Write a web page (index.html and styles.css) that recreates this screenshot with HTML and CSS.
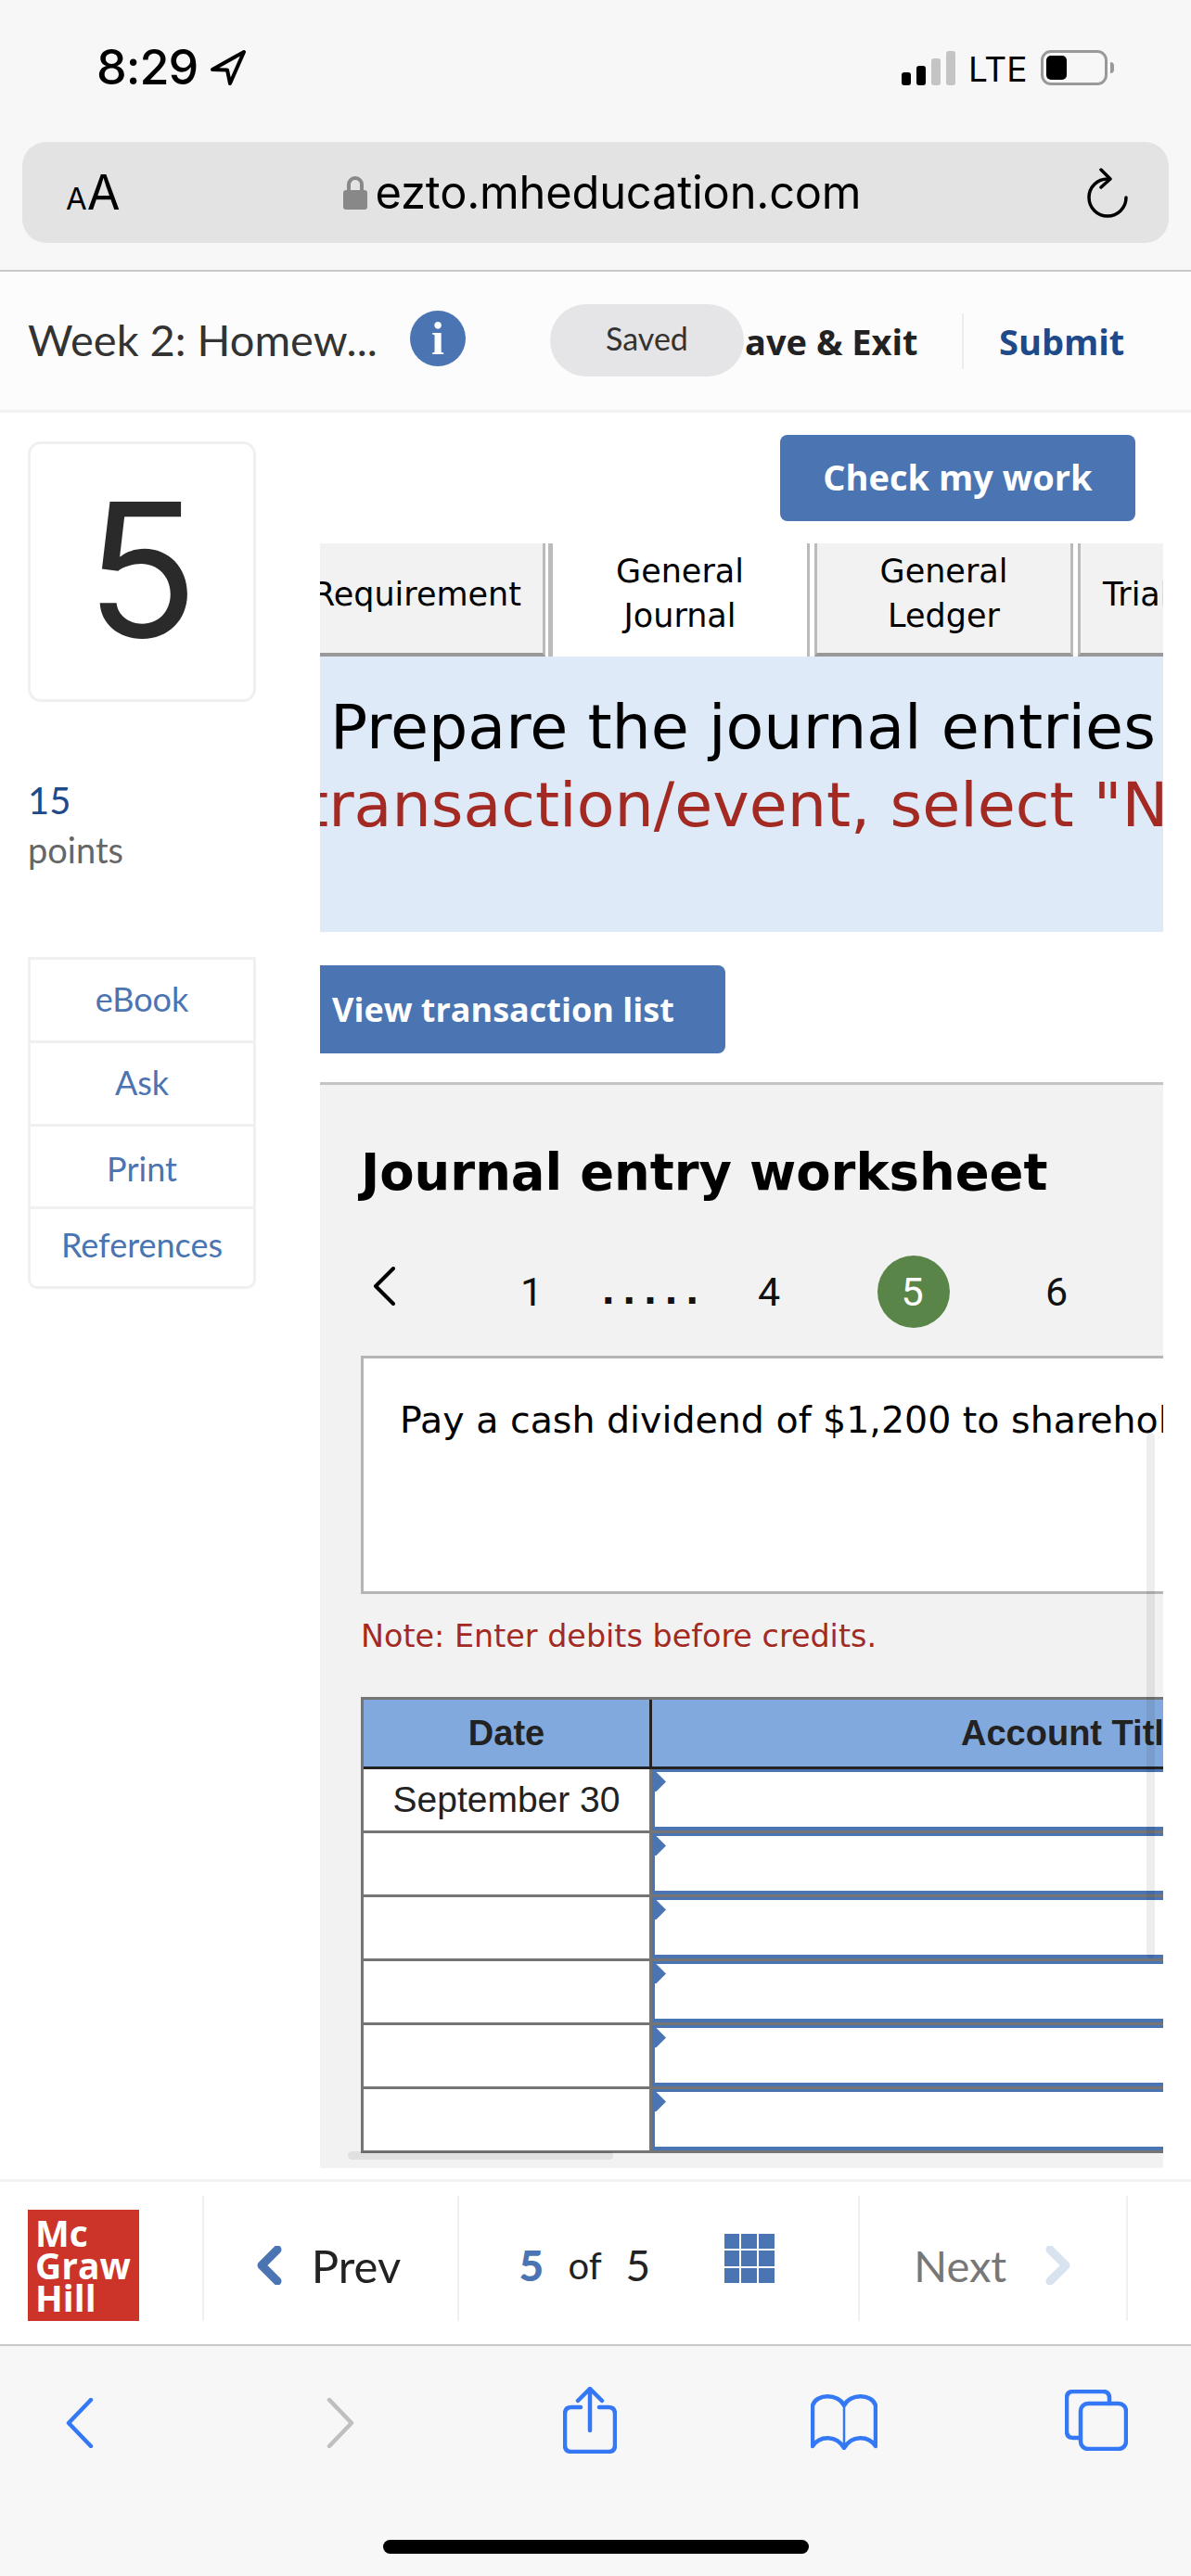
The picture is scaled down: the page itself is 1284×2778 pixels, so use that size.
FILE: index.html
```html
<!DOCTYPE html>
<html>

<head>
    <meta charset="utf-8" />
    <title>Journal entry worksheet</title>
    <link rel="stylesheet" href="styles.css">
</head>

<body>
    <div class="browserTop">
        <div class="statusBar">
            <div class="statusLeft">
                <span class="time">8:29</span>
                <svg class="locationIcon" viewBox="0 0 40 38"><path d="M37 2 L3 21 L19 21.5 L22 36 Z" /></svg>
            </div>
            <div class="statusRight">
                <div class="signal">
                    <i class="bar bar1"></i><i class="bar bar2"></i><i class="bar bar3"></i><i class="bar bar4"></i>
                </div>
                <span class="lte">LTE</span>
                <div class="battery"><i class="batteryFill"></i></div>
                <i class="batteryNub"></i>
            </div>
        </div>
        <div class="addressBar">
            <div class="textSize"><span class="smallA">A</span><span class="bigA">A</span></div>
            <div class="url">
                <svg class="lockIcon" viewBox="0 0 26 36">
                    <path class="lockLoop" d="M6 17 V9 A7 7 0 0 1 20 9 V17" />
                    <rect x="0" y="15" width="26" height="21" rx="3" />
                </svg>
                <span>ezto.mheducation.com</span>
            </div>
            <svg class="reloadIcon" viewBox="0 0 44 54">
                <path d="M22 12 A20 20 0 1 0 42 32" />
                <path d="M15 2 L25 12 L15 21" />
            </svg>
        </div>
    </div>

    <div class="assignmentBar">
        <span class="assignmentName">Week 2: Homew...</span>
        <span class="infoCircle">i</span>
        <span class="saveExit">ave &amp; Exit</span>
        <span class="submit">Submit</span>
        <span class="savedPill">Saved</span>
    </div>

    <div class="main">
        <div class="sidebar">
            <div class="questionCard">5</div>
            <div class="pointsNumber">15</div>
            <div class="pointsLabel">points</div>
            <div class="sideMenu">
                <a class="sideItem item1">eBook</a>
                <a class="sideItem item2">Ask</a>
                <a class="sideItem item3">Print</a>
                <a class="sideItem item4">References</a>
            </div>
        </div>

        <div class="content">
            <div class="checkRow"><button class="checkButton">Check my work</button></div>

            <div class="tabs">
                <div class="tab tabRequirement">Requirement</div>
                <div class="tab tabActive">General<br>Journal</div>
                <div class="tab tabLedger">General<br>Ledger</div>
                <div class="tab tabTrial">Trial Balance</div>
            </div>

            <div class="banner">
                <div class="bannerLine1">Prepare the journal entries</div>
                <div class="bannerLine2">transaction/event, select "No Journal Entry Required"</div>
            </div>

            <button class="viewButton">View transaction list</button>

            <div class="panel">
                <h2 class="panelTitle">Journal entry worksheet</h2>

                <div class="pager">
                    <svg class="pagerBack" viewBox="0 0 26 42"><path d="M23 2 L4 21 L23 40" /></svg>
                    <span class="page pageOne">1</span>
                    <span class="page pageDots">.....</span>
                    <span class="page pageFour">4</span>
                    <span class="page pageCurrent">5</span>
                    <span class="page pageSix">6</span>
                </div>

                <div class="descBox">Pay a cash dividend of $1,200 to shareholders.</div>

                <p class="note">Note: Enter debits before credits.</p>

                <table class="journal">
                    <tr>
                        <th class="dateCol">Date</th>
                        <th class="titleCol">Account Title</th>
                    </tr>
                    <tr>
                        <td class="dateCell">September 30</td>
                        <td class="titleCell"><div class="accountInput"><i class="flag"></i></div></td>
                    </tr>
                    <tr>
                        <td class="dateCell"></td>
                        <td class="titleCell"><div class="accountInput"><i class="flag"></i></div></td>
                    </tr>
                    <tr>
                        <td class="dateCell"></td>
                        <td class="titleCell"><div class="accountInput"><i class="flag"></i></div></td>
                    </tr>
                    <tr>
                        <td class="dateCell"></td>
                        <td class="titleCell"><div class="accountInput"><i class="flag"></i></div></td>
                    </tr>
                    <tr>
                        <td class="dateCell"></td>
                        <td class="titleCell"><div class="accountInput"><i class="flag"></i></div></td>
                    </tr>
                    <tr>
                        <td class="dateCell"></td>
                        <td class="titleCell"><div class="accountInput"><i class="flag"></i></div></td>
                    </tr>
                </table>

                <div class="scrollV"></div>
                <div class="scrollH"></div>
            </div>
        </div>
    </div>

    <div class="footerBar">
        <div class="logoCell">
            <div class="logo">Mc<br>Graw<br>Hill</div>
        </div>
        <div class="prevCell">
            <svg class="footChevron" viewBox="0 0 28 42"><path d="M23 4 L6 21 L23 38" /></svg>
            <span>Prev</span>
        </div>
        <div class="countCell">
            <span class="countNow">5</span>
            <span class="countOf">of</span>
            <span class="countAll">5</span>
            <div class="gridIcon">
                <i></i><i></i><i></i><i></i><i></i><i></i><i></i><i></i><i></i>
            </div>
        </div>
        <div class="nextCell">
            <span>Next</span>
            <svg class="footChevron nextChevron" viewBox="0 0 28 42"><path d="M5 4 L22 21 L5 38" /></svg>
        </div>
    </div>

    <div class="toolbar">
        <svg class="toolIcon backIcon" viewBox="0 0 30 54"><path d="M27 2 L3 27 L27 52" /></svg>
        <svg class="toolIcon forwardIcon" viewBox="0 0 30 54"><path d="M3 2 L27 27 L3 52" /></svg>
        <svg class="toolIcon shareIcon" viewBox="0 0 58 72">
            <path d="M19 22 H9 Q2 22 2 29 V63 Q2 70 9 70 H49 Q56 70 56 63 V29 Q56 22 49 22 H39" />
            <path d="M29 47 V2 M16 15 L29 2 L42 15" />
        </svg>
        <svg class="toolIcon bookIcon" viewBox="0 0 72 60">
            <path d="M36 12 C30 -1 6 -1 2 12 V56 C10 44 28 44 36 58 C44 44 62 44 70 56 V12 C66 -1 42 -1 36 12 Z" />
            <path class="thin" d="M36 12 V56" />
        </svg>
        <svg class="toolIcon tabsIcon" viewBox="0 0 68 66">
            <path d="M17 52 H9 Q2 52 2 45 V9 Q2 2 9 2 H41 Q48 2 48 9 V15" />
            <rect x="17" y="15" width="49" height="49" rx="8" />
        </svg>
        <div class="homeBar"></div>
    </div>
</body>

</html>
```

FILE: styles.css
```css
* {
    box-sizing: border-box;
}

html,
body {
    margin: 0;
    width: 1284px;
    height: 2778px;
    overflow: hidden;
    background-color: white;
    font-family: "Lato", sans-serif;
}

/* browser top */
.browserTop {
    height: 293px;
    background-color: #f7f7f7;
    border-bottom: 2px solid #c8c8c8;
}

.statusBar {
    height: 153px;
    display: flex;
    justify-content: space-between;
    padding: 54px 83px 0 104px;
}

.statusLeft {
    display: flex;
    gap: 13px;
    height: 38px;
    align-items: center;
}

.time {
    font-family: "Inter", sans-serif;
    font-size: 52px;
    font-weight: 500;
    line-height: 38px;
    letter-spacing: -1px;
    color: black;
}

.locationIcon {
    width: 40px;
    height: 38px;
    fill: none;
    stroke: black;
    stroke-width: 4;
    stroke-linejoin: round;
}

.statusRight {
    display: flex;
    height: 38px;
    align-items: center;
}

.signal {
    display: flex;
    gap: 6px;
    align-items: flex-end;
    height: 37px;
    margin-right: 14px;
}

.bar {
    display: block;
    width: 10px;
    border-radius: 3px;
    background-color: black;
}

.bar1 {
    height: 14px;
}

.bar2 {
    height: 21px;
}

.bar3 {
    height: 29px;
    background-color: #c4c4c4;
}

.bar4 {
    height: 37px;
    background-color: #c4c4c4;
}

.lte {
    font-family: "Inter", sans-serif;
    font-size: 37px;
    font-weight: 400;
    width: 78px;
    padding-top: 3px;
    color: black;
}

.battery {
    width: 72px;
    height: 38px;
    border: 3px solid #999;
    border-radius: 11px;
    padding: 3px;
}

.batteryFill {
    display: block;
    width: 22px;
    height: 100%;
    background-color: black;
    border-radius: 5px;
}

.batteryNub {
    display: block;
    width: 4px;
    height: 12px;
    margin-left: 3px;
    background-color: #999;
    border-radius: 0 4px 4px 0;
}

.addressBar {
    height: 109px;
    margin: 0 24px;
    padding: 0 44px 0 47px;
    background-color: #e3e3e3;
    border-radius: 26px;
    display: flex;
    align-items: center;
    justify-content: space-between;
}

.textSize {
    width: 120px;
    font-family: "Inter", sans-serif;
    color: black;
    white-space: nowrap;
}

.smallA {
    font-size: 33px;
}

.bigA {
    font-size: 52px;
}

.url {
    display: flex;
    align-items: center;
    gap: 9px;
    font-family: "Inter", sans-serif;
    font-size: 48.8px;
    color: black;
    letter-spacing: -0.2px;
    margin-right: 65px;
}

.lockIcon {
    width: 26px;
    height: 36px;
    fill: #888;
}

.lockLoop {
    fill: none;
    stroke: #888;
    stroke-width: 4;
}

.reloadIcon {
    width: 44px;
    height: 54px;
    fill: none;
    stroke: black;
    stroke-width: 3.5;
    stroke-linecap: round;
    stroke-linejoin: round;
}

/* assignment bar */
.assignmentBar {
    position: relative;
    height: 152px;
    padding-left: 30px;
    background-color: #fcfcfc;
    border-bottom: 3px solid #f2f2f2;
    display: flex;
    align-items: center;
}

.assignmentName {
    font-size: 47px;
    font-weight: 400;
    color: #333;
    width: 412px;
    white-space: nowrap;
    margin-bottom: 4px;
}

.infoCircle {
    width: 60px;
    height: 60px;
    margin-bottom: 6px;
    border-radius: 50%;
    background-color: #4a74b2;
    color: white;
    font-family: "Liberation Serif", serif;
    font-weight: bold;
    font-size: 50px;
    line-height: 60px;
    text-align: center;
}

.saveExit {
    margin-left: 301px;
    width: 236px;
    font-family: "Open Sans", sans-serif;
    font-weight: 700;
    font-size: 38px;
    color: #222;
    border-right: 2px solid #ececec;
    line-height: 60px;
}

.submit {
    margin-left: 38px;
    font-family: "Open Sans", sans-serif;
    font-weight: 700;
    font-size: 38px;
    color: #1f4a8a;
}

.savedPill {
    position: absolute;
    left: 593px;
    top: 35px;
    width: 209px;
    height: 78px;
    border-radius: 39px;
    background-color: #e5e4e6;
    text-align: center;
    line-height: 74px;
    font-size: 34px;
    color: #333;
}

/* main area */
.main {
    height: 1905px;
    display: flex;
}

.sidebar {
    width: 345px;
    padding: 31px 0 0 30px;
}

.questionCard {
    width: 246px;
    height: 281px;
    border: 3px solid #f0f0f0;
    border-radius: 14px;
    font-family: "Inter", sans-serif;
    font-size: 200px;
    font-weight: 400;
    line-height: 270px;
    text-align: center;
    color: #2a2a2a;
}

.pointsNumber {
    margin-top: 80px;
    font-size: 40px;
    line-height: 52px;
    color: #1f4a8a;
}

.pointsLabel {
    margin-top: 2px;
    font-size: 38px;
    line-height: 50px;
    color: #666;
}

.sideMenu {
    width: 246px;
    margin-top: 91px;
    border: 3px solid #f0f0f0;
    border-radius: 0 0 10px 10px;
}

.sideItem {
    display: block;
    text-align: center;
    font-size: 36px;
    color: #4a74b2;
    border-bottom: 3px solid #f0f0f0;
}

.item1,
.item2 {
    height: 90px;
    line-height: 84px;
}

.item3 {
    height: 89px;
    line-height: 90px;
}

.item4 {
    height: 83px;
    line-height: 76px;
    border-bottom: 0;
}

.content {
    width: 909px;
    padding-top: 24px;
    overflow: hidden;
    font-family: "DejaVu Sans", sans-serif;
}

.checkRow {
    display: flex;
    justify-content: flex-end;
    padding-right: 30px;
}

.checkButton {
    width: 383px;
    height: 93px;
    padding: 0 0 4px;
    border: 0;
    border-radius: 8px;
    background-color: #4a74b2;
    color: white;
    font-family: "Open Sans", sans-serif;
    font-weight: 700;
    font-size: 38px;
}

.tabs {
    height: 122px;
    margin: 24px 0 0 -9px;
    display: flex;
    gap: 3px;
    width: 1400px;
}

.tab {
    padding-bottom: 8px;
    background-color: #f2f2f2;
    border-left: 3px solid #bbb;
    border-right: 3px solid #bbb;
    border-bottom: 4px solid #999;
    display: flex;
    align-items: center;
    justify-content: center;
    text-align: center;
    font-size: 35px;
    line-height: 48px;
    color: black;
}

.tabRequirement {
    width: 252px;
    justify-content: flex-end;
    padding-right: 23px;
    border-left: 0;
}

.tabActive {
    width: 282px;
    padding-bottom: 14px;
    background-color: white;
    border-left-width: 5px;
    border-bottom: 0;
    margin-right: 2px;
}

.tabLedger {
    width: 279px;
    padding-bottom: 10px;
    margin-right: 2px;
}

.tabTrial {
    width: 300px;
    justify-content: flex-start;
    padding-left: 24px;
    white-space: nowrap;
}

.banner {
    height: 297px;
    padding-top: 34px;
    background-color: #deeaf8;
    font-size: 66.7px;
    line-height: 84px;
    white-space: nowrap;
}

.bannerLine1 {
    margin-left: 11px;
    color: black;
}

.bannerLine2 {
    margin-left: -17px;
    color: #a32a22;
}

.viewButton {
    display: block;
    width: 437px;
    height: 95px;
    margin-top: 36px;
    padding: 0 0 0 13px;
    border: 0;
    border-radius: 0 8px 8px 0;
    background-color: #4a74b2;
    color: white;
    font-family: "Open Sans", sans-serif;
    font-weight: 700;
    font-size: 36px;
    text-align: left;
}

.panel {
    position: relative;
    height: 1171px;
    margin-top: 31px;
    padding-left: 44px;
    background-color: #f2f2f2;
    border-top: 3px solid #c4c4c4;
    overflow: hidden;
}

.panelTitle {
    margin: 0;
    padding-top: 54px;
    font-size: 54.4px;
    line-height: 82px;
    font-weight: bold;
    color: black;
    white-space: nowrap;
}

.pager {
    height: 78px;
    margin-top: 48px;
    display: flex;
    align-items: center;
}

.pagerBack {
    width: 26px;
    height: 42px;
    margin: 0 12px 12px;
    fill: none;
    stroke: black;
    stroke-width: 4;
    stroke-linecap: round;
    stroke-linejoin: round;
}

.page {
    text-align: center;
    font-family: "Roboto", sans-serif;
    font-size: 43px;
    color: #111;
}

.pageOne {
    width: 100px;
    margin-left: 84px;
}

.pageDots {
    width: 168px;
    margin-left: -2px;
    font-family: "DejaVu Sans", sans-serif;
    font-weight: bold;
    font-size: 38px;
    letter-spacing: 8.2px;
}

.pageFour {
    width: 80px;
}

.pageCurrent {
    width: 78px;
    height: 78px;
    margin-left: 77px;
    padding-right: 3px;
    border-radius: 50%;
    background-color: #5a8549;
    color: white;
    line-height: 78px;
}

.pageSix {
    width: 78px;
    margin-left: 76px;
}

.descBox {
    width: 1100px;
    height: 257px;
    margin-top: 30px;
    padding: 38px 0 0 39px;
    background-color: white;
    border: 3px solid #b5b5b5;
    font-size: 39.5px;
    line-height: 56px;
    color: black;
    white-space: nowrap;
}

.note {
    margin: 24px 0 0;
    font-size: 33.4px;
    line-height: 44px;
    color: #a32a22;
}

.journal {
    margin-top: 43px;
    width: 1220px;
    table-layout: fixed;
    border-spacing: 0;
    border-top: 3px solid #757575;
    border-left: 3px solid #757575;
    font-family: "Liberation Sans", sans-serif;
}

.dateCol {
    width: 311px;
    height: 75px;
    padding: 0;
    background-color: #82a9dd;
    border-right: 3px solid #222;
    border-bottom: 3px solid #222;
    font-size: 38px;
    color: #222;
}

.titleCol {
    height: 75px;
    padding: 0;
    background-color: #82a9dd;
    border-bottom: 3px solid #222;
    font-size: 38px;
    color: #222;
}

.dateCell {
    height: 69px;
    padding: 0;
    background-color: white;
    border-right: 3px solid #757575;
    border-bottom: 3px solid #757575;
    text-align: center;
    font-size: 39px;
    color: #222;
}

.titleCell {
    height: 69px;
    padding: 0;
    border-bottom: 3px solid #757575;
}

.accountInput {
    position: relative;
    height: 66px;
    background-color: white;
    border-top: 3px solid #4a74b2;
    border-left: 3px solid #4a74b2;
    border-bottom: 4px solid #4a74b2;
}

.flag {
    position: absolute;
    left: -3px;
    top: 0;
    width: 15px;
    height: 21px;
    background-color: #4a74b2;
    clip-path: polygon(0 0, 30% 0, 100% 50%, 30% 100%, 0 100%);
}

.scrollV {
    position: absolute;
    left: 891px;
    top: 375px;
    width: 9px;
    height: 567px;
    background-color: rgba(0, 0, 0, 0.07);
    border-radius: 5px;
}

.scrollH {
    position: absolute;
    left: 30px;
    top: 1150px;
    width: 286px;
    height: 9px;
    background-color: rgba(0, 0, 0, 0.07);
    border-radius: 5px;
}

/* footer */
.footerBar {
    height: 178px;
    padding: 15px 68px 0 0;
    background-color: white;
    border-top: 3px solid #f2f2f2;
    display: flex;
}

.logoCell {
    width: 218px;
    padding: 15px 0 0 30px;
}

.logo {
    width: 120px;
    height: 120px;
    padding: 7px 0 0 8px;
    background-color: #cc3329;
    color: white;
    font-family: "Open Sans", sans-serif;
    font-weight: 700;
    font-size: 39px;
    line-height: 35px;
}

.prevCell,
.countCell,
.nextCell {
    height: 135px;
    padding-top: 14px;
    display: flex;
    align-items: center;
    border-left: 2px solid #f0f0f0;
    font-size: 49px;
    color: #222;
}

.prevCell {
    width: 275px;
    padding-left: 56px;
    gap: 32px;
}

.countCell {
    width: 433px;
    padding-left: 65px;
    font-size: 46px;
}

.nextCell {
    width: 291px;
    padding-left: 58px;
    gap: 42px;
    font-size: 47px;
    color: #777;
    border-right: 2px solid #f0f0f0;
}

.footChevron {
    width: 28px;
    height: 42px;
    fill: none;
    stroke: #4a74b2;
    stroke-width: 9;
    stroke-linecap: round;
    stroke-linejoin: round;
}

.nextChevron {
    stroke: #d9e3ef;
}

.countNow {
    width: 53px;
    font-weight: 900;
    color: #4a74b2;
}

.countOf {
    width: 62px;
    font-size: 40px;
}

.countAll {
    width: 106px;
}

.gridIcon {
    width: 54px;
    height: 53px;
    margin-bottom: 14px;
    display: grid;
    grid-template-columns: repeat(3, 1fr);
    gap: 2px;
}

.gridIcon i {
    display: block;
    background-color: #4a74b2;
}

/* safari toolbar */
.toolbar {
    position: relative;
    height: 250px;
    background-color: #f7f7f7;
    border-top: 2px solid #c8c8c8;
}

.toolIcon {
    position: absolute;
    fill: none;
    stroke: #3478f6;
    stroke-width: 4.5;
    stroke-linecap: round;
    stroke-linejoin: round;
}

.thin {
    stroke-width: 2.5;
}

.backIcon {
    left: 71px;
    top: 56px;
    width: 30px;
    height: 54px;
}

.forwardIcon {
    left: 352px;
    top: 56px;
    width: 30px;
    height: 54px;
    stroke: #bfbfbf;
}

.shareIcon {
    left: 607px;
    top: 44px;
    width: 58px;
    height: 72px;
}

.bookIcon {
    left: 874px;
    top: 52px;
    width: 72px;
    height: 60px;
}

.tabsIcon {
    left: 1148px;
    top: 47px;
    width: 68px;
    height: 66px;
}

.homeBar {
    position: absolute;
    left: 413px;
    top: 209px;
    width: 459px;
    height: 15px;
    background-color: black;
    border-radius: 8px;
}
```
